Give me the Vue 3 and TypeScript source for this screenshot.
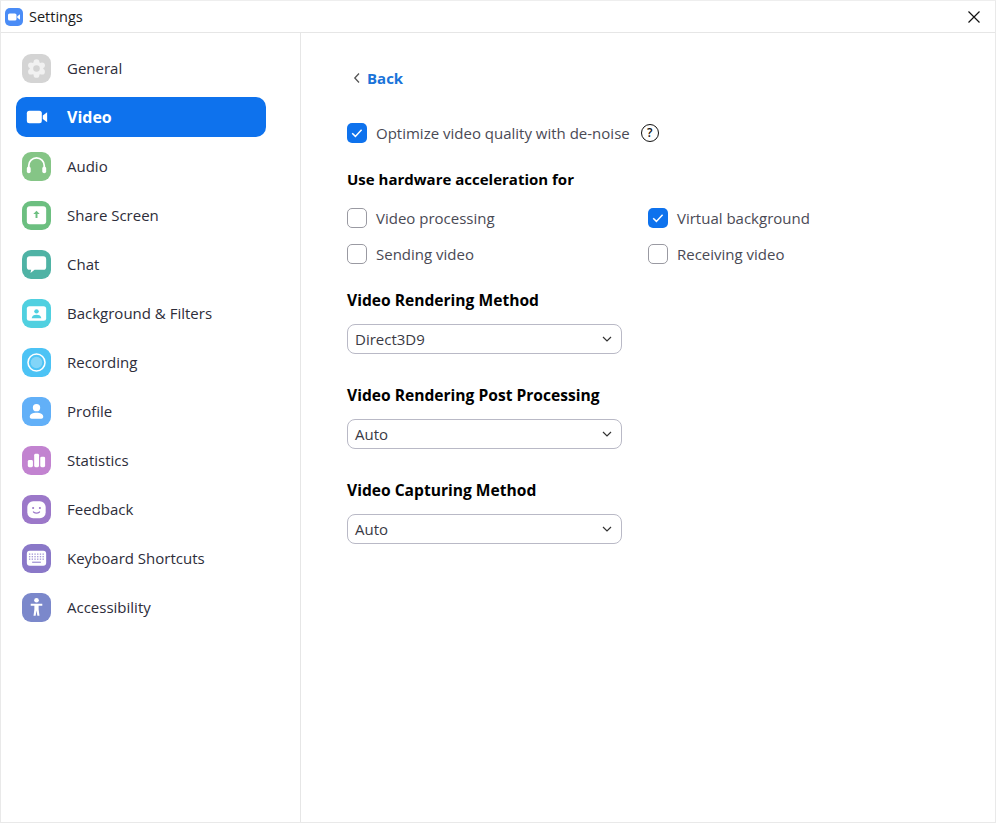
<script setup lang="ts">
interface NavItem { label: string; color: string; key: string; active?: boolean }
const nav: NavItem[] = [
  { label: 'General', color: '#d4d4d4', key: 'general' },
  { label: 'Video', color: 'transparent', key: 'video', active: true },
  { label: 'Audio', color: '#85c586', key: 'audio' },
  { label: 'Share Screen', color: '#6cbf80', key: 'share' },
  { label: 'Chat', color: '#4fb3a5', key: 'chat' },
  { label: 'Background & Filters', color: '#50d0e0', key: 'bg' },
  { label: 'Recording', color: '#4cc3f5', key: 'rec' },
  { label: 'Profile', color: '#62b0f8', key: 'profile' },
  { label: 'Statistics', color: '#c283d0', key: 'stats' },
  { label: 'Feedback', color: '#9c78c9', key: 'feedback' },
  { label: 'Keyboard Shortcuts', color: '#8a78c8', key: 'keyboard' },
  { label: 'Accessibility', color: '#7b88cb', key: 'a11y' },
]
const hw = [
  { label: 'Video processing', checked: false },
  { label: 'Virtual background', checked: true },
  { label: 'Sending video', checked: false },
  { label: 'Receiving video', checked: false },
]
const selects = [
  { title: 'Video Rendering Method', value: 'Direct3D9' },
  { title: 'Video Rendering Post Processing', value: 'Auto' },
  { title: 'Video Capturing Method', value: 'Auto' },
]
const lobes = [0, 60, 120, 180, 240, 300].map((d) => ({
  x: 15 + 6.6 * Math.cos(((d + 30) * Math.PI) / 180),
  y: 15 + 6.6 * Math.sin(((d + 30) * Math.PI) / 180),
}))
</script>

<template>
  <div class="window">
    <header class="titlebar">
      <svg class="logo" width="18" height="18" viewBox="0 0 18 18">
        <rect width="18" height="18" rx="5" fill="#4a8cf6" />
        <rect x="3" y="5.500" width="8.500" height="7" rx="1.600" fill="#fff" />
        <path d="M12.300 8.200 15 6.300v5.400l-2.700-1.900z" fill="#fff" />
      </svg>
      <span class="title">Settings</span>
      <svg class="close" width="14" height="14" viewBox="0 0 14 14">
        <path d="M1.500 1.500l11 11M12.500 1.500l-11 11" stroke="#111" stroke-width="1.200" fill="none" />
      </svg>
    </header>
    <div class="body">
      <aside class="sidebar">
        <div v-for="item in nav" :key="item.key" class="nav-item" :class="{ active: item.active }">
          <span class="icon" :style="{ background: item.color }">
            <svg width="29" height="29" viewBox="0 0 30 30">
              <template v-if="item.key === 'general'">
                <circle cx="15" cy="15" r="7" fill="#f1f1f1" />
                <circle v-for="(l, i) in lobes" :key="i" :cx="l.x" :cy="l.y" r="3" fill="#f1f1f1" />
                <circle cx="15" cy="15" r="3.400" fill="#d4d4d4" />
              </template>
              <template v-else-if="item.key === 'video'">
                <rect x="5" y="8" width="15.500" height="13" rx="2.600" fill="#fff" />
                <path d="M21.500 13l4.500-3.500v10.500l-4.500-3.400z" fill="#fff" />
              </template>
              <template v-else-if="item.key === 'audio'">
                <path d="M7 17v-3a8 8 0 0 1 16 0v3" stroke="#fff" stroke-width="1.800" fill="none" />
                <rect x="5" y="15" width="4" height="7" rx="2" fill="#fff" />
                <rect x="21" y="15" width="4" height="7" rx="2" fill="#fff" />
              </template>
              <template v-else-if="item.key === 'share'">
                <rect x="5" y="5.500" width="20" height="18.500" rx="3" fill="#fff" />
                <path d="M15 10.200l-3.300 3.300h2.300v4.200h2v-4.200h2.300z" fill="#6cbf80" />
              </template>
              <template v-else-if="item.key === 'chat'">
                <path d="M8 6.500h14a3 3 0 0 1 3 3v8a3 3 0 0 1-3 3H13l-4.200 3.200.7-3.200H8a3 3 0 0 1-3-3v-8a3 3 0 0 1 3-3z" fill="#fff" />
              </template>
              <template v-else-if="item.key === 'bg'">
                <rect x="5" y="7.500" width="20" height="15" rx="2.600" fill="#fff" />
                <circle cx="15" cy="12.800" r="2.300" fill="#50d0e0" />
                <path d="M10 20c.3-2.500 2.200-3.600 5-3.600s4.700 1.100 5 3.600z" fill="#50d0e0" />
              </template>
              <template v-else-if="item.key === 'rec'">
                <circle cx="15" cy="15" r="8.800" stroke="#fff" stroke-width="1.600" fill="none" />
                <circle cx="15" cy="15" r="6" fill="#fff" fill-opacity=".3" />
              </template>
              <template v-else-if="item.key === 'profile'">
                <circle cx="15" cy="11" r="3.800" fill="#fff" />
                <path d="M8 20.500c0-2.900 3.200-4.300 7-4.300s7 1.400 7 4.300c0 1.200-.9 2-2 2H10c-1.100 0-2-.8-2-2z" fill="#fff" />
              </template>
              <template v-else-if="item.key === 'stats'">
                <rect x="6" y="14.500" width="5.300" height="7.500" rx="1.500" fill="#fff" />
                <rect x="12.600" y="8" width="5" height="14" rx="1.500" fill="#fff" />
                <rect x="18.900" y="11" width="5" height="11" rx="1.500" fill="#fff" />
              </template>
              <template v-else-if="item.key === 'feedback'">
                <rect x="5.500" y="6.500" width="19" height="17.500" rx="6" fill="#fff" />
                <circle cx="11.500" cy="13.500" r="1.100" fill="#9c78c9" />
                <circle cx="18.500" cy="13.500" r="1.100" fill="#9c78c9" />
                <path d="M11.800 17.500c1.900 1.400 4.500 1.400 6.400 0" stroke="#9c78c9" stroke-width="1.200" fill="none" stroke-linecap="round" />
              </template>
              <template v-else-if="item.key === 'keyboard'">
                <rect x="5" y="7" width="20" height="15.500" rx="3" fill="#fff" />
                <g fill="#a79ad6">
                  <rect v-for="n in 6" :key="'a' + n" :x="7.200 + (n - 1) * 2.800" y="9.800" width="1.400" height="1.400" />
                  <rect v-for="n in 6" :key="'b' + n" :x="7.200 + (n - 1) * 2.800" y="12.400" width="1.400" height="1.400" />
                  <rect v-for="n in 6" :key="'c' + n" :x="7.200 + (n - 1) * 2.800" y="15" width="1.400" height="1.400" />
                  <rect x="10.500" y="18.200" width="9" height="1.400" />
                </g>
              </template>
              <template v-else>
                <circle cx="15" cy="7.500" r="2.400" fill="#fff" />
                <path d="M9 11h12v2.200h-3.800v3.600l.9 6.700h-2.200L15 18.200l-.9 5.300h-2.200l.9-6.700v-3.600H9z" fill="#fff" />
              </template>
            </svg>
          </span>
          <span class="nav-label">{{ item.label }}</span>
        </div>
      </aside>
      <main class="content">
        <div class="back">
          <svg width="8" height="12" viewBox="0 0 8 12">
            <path d="M6 1.500 1.800 6 6 10.500" stroke="#555" stroke-width="1.300" fill="none" />
          </svg>
          <span>Back</span>
        </div>
        <div class="denoise">
          <span class="check on">
            <svg width="20" height="20" viewBox="0 0 20 20"><path d="M5.200 10.200l3.200 3.200 6.200-6.600" stroke="#fff" stroke-width="1.500" fill="none" /></svg>
          </span>
          <span class="opt-label">Optimize video quality with de-noise</span>
          <span class="help">?</span>
        </div>
        <h2 class="heading hw-heading">Use hardware acceleration for</h2>
        <div class="hw-grid">
          <div v-for="o in hw" :key="o.label" class="option">
            <span class="check" :class="{ on: o.checked }">
              <svg v-if="o.checked" width="20" height="20" viewBox="0 0 20 20"><path d="M5.200 10.200l3.200 3.200 6.200-6.600" stroke="#fff" stroke-width="1.500" fill="none" /></svg>
            </span>
            <span class="opt-label">{{ o.label }}</span>
          </div>
        </div>
        <section v-for="s in selects" :key="s.title" class="select-group">
          <h2 class="heading wide">{{ s.title }}</h2>
          <div class="select">
            <span>{{ s.value }}</span>
            <svg width="10" height="6" viewBox="0 0 10 6"><path d="M1 1l4 4 4-4" stroke="#333" stroke-width="1.200" fill="none" /></svg>
          </div>
        </section>
      </main>
    </div>
  </div>
</template>

<style scoped>
.window {
  width: 996px;
  height: 823px;
  box-sizing: border-box;
  background: #fff;
  border: 1px solid #e9e9e9;
  border-top-color: #eeeeee;
  font-family: "Open Sans", "Noto Sans", sans-serif;
  display: flex;
  flex-direction: column;
  overflow: hidden;
  color: #232333;
}
.titlebar {
  height: 32px;
  flex: none;
  box-sizing: border-box;
  display: flex;
  align-items: center;
  padding: 0 14px 0 4px;
  border-bottom: 1px solid #e6e6e6;
}
.title {
  margin-left: 6px;
  font-size: 14.5px;
  color: #1a1a1a;
}
.close { margin-left: auto; }
.body { flex: 1; display: flex; min-height: 0; }
.sidebar {
  width: 300px;
  flex: none;
  box-sizing: border-box;
  border-right: 1px solid #e6e6e6;
  padding: 15px 34px 0 15px;
  display: flex;
  flex-direction: column;
  gap: 9px;
}
.nav-item {
  height: 40px;
  flex: none;
  display: flex;
  align-items: center;
  padding-left: 6px;
  border-radius: 10px;
}
.nav-item.active { background: #0e72ed; }
.icon {
  width: 29px;
  height: 29px;
  border-radius: 9px;
  flex: none;
  display: block;
}
.icon svg { display: block; }
.nav-label {
  margin-left: 16px;
  font-size: 15px;
  color: #2d2d3a;
}
.active .nav-label { color: #fff; font-weight: 700; font-size: 16px; }
.content { flex: 1; padding: 30px 0 0 46px; min-width: 0; }
.back {
  height: 30px;
  display: flex;
  align-items: center;
  gap: 6px;
  padding-left: 6px;
  font-size: 15px;
  font-weight: 700;
  color: #1a73d9;
}
.denoise {
  margin-top: 30px;
  height: 20px;
  display: flex;
  align-items: center;
}
.check {
  width: 20px;
  height: 20px;
  box-sizing: border-box;
  flex: none;
  border-radius: 5px;
  border: 1px solid #9a9aa2;
  background: #fff;
  display: block;
}
.check.on { background: #0e72ed; border: none; }
.check svg { display: block; }
.opt-label {
  margin-left: 9px;
  font-size: 15px;
  color: #4a4a55;
}
.help {
  width: 18px;
  height: 18px;
  box-sizing: border-box;
  border: 1.5px solid #111;
  border-radius: 50%;
  margin-left: 11px;
  font-size: 12px;
  font-weight: 600;
  line-height: 15px;
  text-align: center;
  color: #111;
}
.heading {
  margin: 0;
  font-size: 15px;
  line-height: 20px;
  font-weight: 700;
  color: #000;
}
.heading.wide { font-size: 15.6px; }
.hw-heading { margin-top: 26px; }
.hw-grid {
  margin-top: 19px;
  width: 500px;
  display: grid;
  grid-template-columns: 301px 1fr;
  row-gap: 16px;
}
.option { display: flex; align-items: center; height: 20px; }
.select-group { margin-top: 26px; }
.select-group + .select-group { margin-top: 31px; }
.select {
  margin-top: 14px;
  width: 275px;
  height: 30px;
  box-sizing: border-box;
  border: 1px solid #b9b9c6;
  border-radius: 8px;
  padding: 0 9px 0 7px;
  display: flex;
  align-items: center;
  justify-content: space-between;
  font-size: 15px;
  color: #3a3a45;
}
</style>
